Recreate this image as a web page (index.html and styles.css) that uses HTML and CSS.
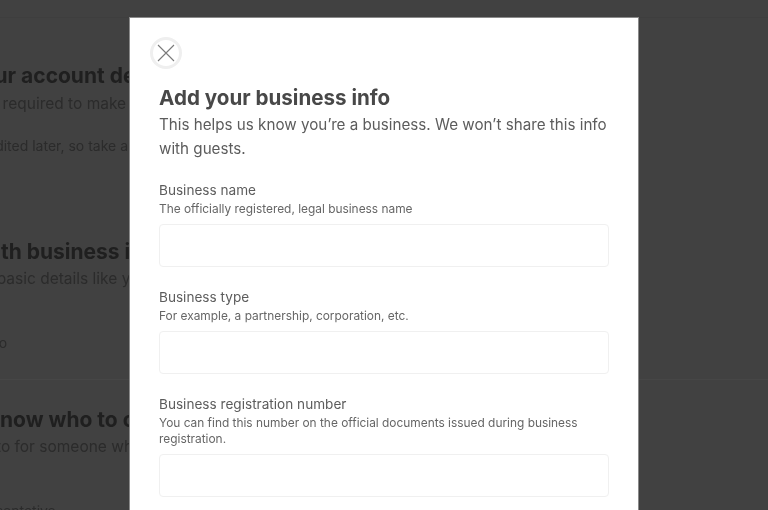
FILE: index.html
```html
<!DOCTYPE html>
<html lang="en">
<head>
    <meta charset="UTF-8">
    <meta name="viewport" content="width=device-width, initial-scale=1.0">
    <title>Add your business info</title>
    <link rel="stylesheet" href="styles.css">
</head>
<body>
    <div class="page">
        <div class="topbar"></div>
        <div class="steps">
            <section class="step step-account">
                <h2>Enter your account details</h2>
                <p class="step-sub">This info is required to make your account</p>
                <p class="step-note">Can be edited later, so take a moment</p>
            </section>
            <section class="step step-business">
                <h2>Start with business info</h2>
                <p class="step-sub">Add the basic details like your name</p>
                <p class="step-note">Business info</p>
            </section>
            <section class="step step-contact">
                <h2>Let us know who to contact</h2>
                <p class="step-sub">We'll go to for someone who can help</p>
                <p class="step-note">Add representative</p>
            </section>
        </div>
    </div>

    <div class="modal">
        <button class="close-btn" aria-label="Close">
            <svg viewBox="0 0 20 20" width="20" height="20">
                <path d="M2 2 L18 18 M18 2 L2 18" fill="none" stroke="#7a7a7a" stroke-width="1.1"/>
            </svg>
        </button>
        <h1>Add your business info</h1>
        <p class="intro">This helps us know you’re a business. We won’t share this info with guests.</p>

        <div class="field field-first">
            <label>Business name</label>
            <p class="hint">The officially registered, legal business name</p>
            <input type="text">
        </div>
        <div class="field">
            <label>Business type</label>
            <p class="hint">For example, a partnership, corporation, etc.</p>
            <input type="text">
        </div>
        <div class="field">
            <label>Business registration number</label>
            <p class="hint">You can find this number on the official documents issued during business registration.</p>
            <input type="text">
        </div>
    </div>
</body>
</html>
```
FILE: styles.css
```css
html,
body {
    margin: 0;
    padding: 0;
    height: 510px;
    overflow: hidden;
}

body {
    position: relative;
    background: #414141;
    font-family: Inter, "Noto Sans", sans-serif;
    filter: blur(0.4px);
}

.page {
    height: 510px;
    overflow: hidden;
}

.topbar {
    height: 17px;
    border-bottom: 1px solid #3e3e3e;
}

.steps {
    margin-left: -76px;
    white-space: nowrap;
}

.step-account {
    padding-top: 45px;
    height: 142px;
}

.step-business {
    padding-top: 34px;
    height: 140px;
    border-bottom: 1px solid #464646;
}

.step-contact {
    padding-top: 27px;
}

.step h2 {
    margin: 0;
    font-size: 21px;
    line-height: 26px;
    font-weight: 700;
    color: #1f1f1f;
}

.step-sub {
    margin: 2px 0 0 11px;
    font-size: 15.5px;
    line-height: 24px;
    color: #2b2b2b;
}

.step-note {
    margin: 20px 0 0;
    font-size: 14px;
    line-height: 20px;
    color: #2b2b2b;
}

.step-account h2 {
    margin-left: -14px;
}

.step-account .step-sub {
    margin: 3px 0 0 -5px;
}

.step-account .step-note {
    margin-left: 12px;
}

.step-business h2 {
    margin-left: -2px;
}

.step-business .step-note {
    margin-top: 42px;
    margin-left: -5px;
}

.step-contact h2 {
    margin-left: -3px;
}

.step-contact .step-sub {
    margin-left: 9px;
}

.step-contact .step-note {
    margin-top: 42px;
    margin-left: 6px;
}

.modal {
    position: absolute;
    top: 18px;
    left: 130px;
    width: 450px;
    height: 492px;
    padding: 19px 29px 0;
    background: #fff;
    box-shadow: 0 0 0 1px #8a8a8a;
    clip-path: inset(-1px -1px 0 -1px);
}

.close-btn {
    display: flex;
    align-items: center;
    justify-content: center;
    width: 32px;
    height: 32px;
    margin-left: -9px;
    padding: 0;
    background: #fff;
    border: 3px solid #efefef;
    border-radius: 50%;
}

.modal h1 {
    margin: 16px 0 0;
    font-size: 20.6px;
    line-height: 26px;
    font-weight: 700;
    color: #484848;
}

.intro {
    margin: 2px 0 0;
    font-size: 15.2px;
    line-height: 24px;
    color: #5c5c5c;
}

.field {
    margin-top: 21px;
}

.field-first {
    margin-top: 20px;
}

.field label {
    display: block;
    font-size: 13.6px;
    line-height: 18px;
    color: #5c5c5c;
}

.hint {
    margin: 2px 0 7px;
    font-size: 11.9px;
    line-height: 16px;
    color: #666;
}

.field input {
    display: block;
    box-sizing: border-box;
    width: 100%;
    height: 43px;
    background: #fff;
    border: 1px solid #f0f0f0;
    border-radius: 4px;
}
```
